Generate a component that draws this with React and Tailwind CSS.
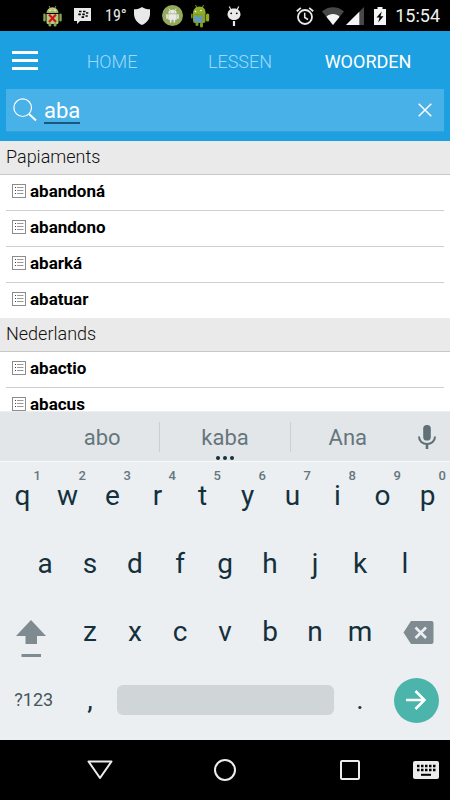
import { useState } from "react";

const results = [
  { language: "Papiaments", words: ["abandoná", "abandono", "abarká", "abatuar"] },
  { language: "Nederlands", words: ["abactio", "abacus"] },
];

const tabs = ["HOME", "LESSEN", "WOORDEN"];

const topRow = ["q", "w", "e", "r", "t", "y", "u", "i", "o", "p"];
const middleRow = ["a", "s", "d", "f", "g", "h", "j", "k", "l"];
const bottomRow = ["z", "x", "c", "v", "b", "n", "m"];

function StatusBar() {
  return (
    <div className="flex h-[31px] shrink-0 items-center justify-between bg-black pl-[43px] pr-[10px] text-white">
      <div className="flex items-center">
        {/* android with a red cross */}
        <svg className="h-[22px] w-[19px]" viewBox="0 0 19 22">
          <path d="M6 1l1.4 2.4M13 1l-1.4 2.4" stroke="#8a9a5a" strokeWidth="1" />
          <path d="M3.5 8a6 5.5 0 0 1 12 0z" fill="#9db45c" />
          <path d="M5 6a4.5 3.5 0 0 1 9 0z" fill="#b9cb86" />
          <path d="M3.5 9h12v8.5a1.5 1.5 0 0 1-1.500 1.500h-9a1.500 1.500 0 0 1-1.500-1.500z" fill="#b4c882" />
          <rect x="0.300" y="8.500" width="2.400" height="8" rx="1.200" fill="#8aa548" />
          <rect x="16.300" y="8.500" width="2.400" height="8" rx="1.200" fill="#8aa548" />
          <rect x="5.500" y="18" width="2.800" height="3.500" rx="1.200" fill="#8aa548" />
          <rect x="10.700" y="18" width="2.800" height="3.500" rx="1.200" fill="#8aa548" />
          <circle cx="7" cy="5.800" r="0.700" fill="#fff" />
          <circle cx="12" cy="5.800" r="0.700" fill="#fff" />
          <path d="M6 9.500l7 7.500M13 9.500l-7 7.500" stroke="#d0161b" strokeWidth="2.200" />
        </svg>
        {/* messenger bubble */}
        <svg className="ml-3 h-4 w-[17px]" viewBox="0 0 17 16">
          <path d="M0 0h17v13H6l-3 3v-3H0z" fill="#e9e9e9" />
          <path d="M5 3.500h2.500M9 3.500h2.500M4.300 6.300h2.500M8.300 6.300h2.500M12 5h2.300M11.500 8h2.300M7.600 9.200h2.500" stroke="#000" strokeWidth="1.700" />
        </svg>
        <span className="ml-[14px] w-[15px] font-['Roboto_Condensed','Liberation_Sans_Narrow',sans-serif] text-[16px] leading-5 text-[#e9e9e9]">19°</span>
        <svg className="ml-[14px] h-[18px] w-4" viewBox="0 0 16 18">
          <path d="M8 0C6 1.600 3 2.300 0 2.300V7c0 5 3.500 9 8 11 4.500-2 8-6 8-11V2.300C13 2.300 10 1.600 8 0z" fill="#e9e9e9" />
        </svg>
        <svg className="ml-3 h-[21px] w-[21px]" viewBox="0 0 21 21">
          <circle cx="10.500" cy="10.500" r="10.500" fill="#94a95c" />
          <path d="M7 3.600l1.400 2.200M14 3.600l-1.400 2.200" stroke="#e9e9e9" strokeWidth="0.800" />
          <path d="M6.300 8.500a4.200 3.700 0 0 1 8.400 0z" fill="#e9e9e9" />
          <path d="M6.300 9.200h8.400v5.600H6.300z" fill="#e9e9e9" />
          <path d="M5 9.800v3.500M16 9.800v3.500M8.700 14v3M12.300 14v3" stroke="#e9e9e9" strokeWidth="1.600" strokeLinecap="round" />
          <circle cx="8.700" cy="6.900" r="0.500" fill="#94a95c" />
          <circle cx="12.300" cy="6.900" r="0.500" fill="#94a95c" />
        </svg>
        {/* android with a blue cross */}
        <svg className="ml-2 h-6 w-[19px]" viewBox="0 0 19 24">
          <path d="M4.500 1l1.500 3M12.500 1l-1.500 3" stroke="#7f9a25" strokeWidth="1" />
          <path d="M2 11C1.500 6 4 2.500 8.500 2.500S15 6 14.500 10z" fill="#8fac2c" />
          <path d="M2 10.500l12.500-.8V17a2 2 0 0 1-2 2H4a2 2 0 0 1-2-2z" fill="#86a324" />
          <rect x="15" y="9.500" width="3.200" height="8" rx="1.600" fill="#8fac2c" />
          <rect x="0" y="9.500" width="1.700" height="5" rx="0.800" fill="#6f8a1c" />
          <rect x="4.500" y="18" width="3" height="4" rx="1.500" fill="#7f9a25" />
          <rect x="9" y="18" width="3" height="5.500" rx="1.500" fill="#7f9a25" />
          <circle cx="4.500" cy="7.500" r="0.800" fill="#fff" />
          <circle cx="10" cy="6.500" r="0.800" fill="#fff" />
          <path d="M3.500 12.500l7.500 5.500M11 12.500l-7.500 5" stroke="#5a97e4" strokeWidth="2.600" />
        </svg>
        {/* robot head on a pin */}
        <svg className="ml-[17px] h-5 w-[14px]" viewBox="0 0 14 20">
          <path d="M2.200 0.500l2 3.500M11.800 0.500l-2 3.500" stroke="#e9e9e9" strokeWidth="1.200" />
          <path d="M0.500 9a6.500 6.500 0 0 1 1-4C3 3 5 2.600 7 2.600s4 .4 5.500 2.400a6.500 6.500 0 0 1 1 4c-.5 3-3.300 5-6.500 5S1 12 .5 9z" fill="#e9e9e9" />
          <circle cx="4.200" cy="7.300" r="0.900" fill="#000" />
          <circle cx="9.800" cy="7.300" r="0.900" fill="#000" />
          <path d="M7 15v5" stroke="#e9e9e9" strokeWidth="2.200" />
        </svg>
      </div>

      <div className="flex items-center">
        <svg className="h-[18px] w-[18px]" viewBox="0 0 18 18" fill="none" stroke="#e9e9e9">
          <circle cx="9" cy="10" r="7" strokeWidth="1.800" />
          <path d="M0.800 4.200l4-3.300M17.200 4.200l-4-3.300" strokeWidth="1.800" />
          <path d="M8.700 5.800v4.700l3.300 2" strokeWidth="1.500" />
        </svg>
        <svg className="ml-2 h-[18px] w-[22px]" viewBox="0 0 22 18">
          <path d="M0 4.500C3 1.800 7 0.300 11 0.300s8 1.500 11 4.200L11 18z" fill="#484848" />
          <path d="M4.400 9.700C6 8 8.500 7 11 7s5 1 6.600 2.700L11 18z" fill="#f5f5f5" />
        </svg>
        <svg className="ml-[2px] h-[18px] w-[18px]" viewBox="0 0 18 18">
          <path d="M18 0v18H0z" fill="#484848" />
          <path d="M13.300 4.700V18H0z" fill="#f5f5f5" />
        </svg>
        <svg className="ml-[10px] h-[18px] w-3" viewBox="0 0 12 18">
          <path d="M3.500 0h5v2H12v16H0V2h3.500z" fill="#f5f5f5" />
          <path d="M7.800 4.500L2.500 10.500h3L4.200 15.500l5.300-6.300h-3z" fill="#000" />
        </svg>
        <span className="ml-[9px] text-[18px] leading-6 text-[#f0f0f0]">15:54</span>
      </div>
    </div>
  );
}

function Header({ query, setQuery, tab, setTab }) {
  return (
    <header className="shrink-0 bg-[#1ca0e2] pb-[9px]">
      <div className="flex h-[58px] items-center pl-3 pr-[18px]">
        <button aria-label="Menu" className="flex w-9 flex-col gap-[5px]">
          <span className="h-[3px] w-[26px] bg-white" />
          <span className="h-[3px] w-[26px] bg-white" />
          <span className="h-[3px] w-[26px] bg-white" />
        </button>
        <nav className="grid flex-1 grid-cols-3 pt-1">
          {tabs.map((name) => (
            <button
              key={name}
              onClick={() => setTab(name)}
              className={"text-[18px] leading-6 " + (tab === name ? "text-white" : "font-light text-[#a0d8f6]")}
            >
              {name}
            </button>
          ))}
        </nav>
      </div>

      <div className="mx-[6px] flex h-[43px] items-center border-b border-[#3a9fd4] bg-[#48b1e7] pl-[7px] pr-3">
        <svg className="h-6 w-6 shrink-0 text-white" viewBox="0 0 24 24" fill="none" stroke="currentColor">
          <circle cx="9.700" cy="9.700" r="8.800" strokeWidth="1.200" />
          <path d="M16 16l7 6.500" strokeWidth="2" />
        </svg>
        <input
          type="text"
          aria-label="Zoeken"
          value={query}
          onChange={(e) => setQuery(e.target.value)}
          className="mx-[7px] h-7 min-w-0 field-sizing-content border-b-2 border-[#17597d] bg-transparent pt-[2px] text-[22px] leading-6 text-white outline-none"
        />
        <button aria-label="Wissen" className="ml-auto" onClick={() => setQuery("")}>
          <svg className="h-[14px] w-[14px] text-white" viewBox="0 0 14 14" stroke="currentColor" strokeWidth="1.500">
            <path d="M0.700 0.700l12.600 12.600M13.300 0.700L0.700 13.300" />
          </svg>
        </button>
      </div>
    </header>
  );
}

function ListIcon() {
  return (
    <svg className="h-[14px] w-[14px] shrink-0" viewBox="0 0 14 14" fill="none">
      <rect x="0.500" y="0.500" width="13" height="13" stroke="#8c8c8c" />
      <path d="M3 3.500h1M3 6.500h1M3 9.500h1" stroke="#444" />
      <path d="M5 3.500h6.500M5 6.500h6.500M5 9.500h6.500" stroke="#999" />
    </svg>
  );
}

function WordList() {
  return (
    <main className="min-h-0 flex-1 overflow-hidden bg-white">
      {results.map((section) => (
        <section key={section.language}>
          <h2 className="flex h-[34px] items-center border-b border-[#c8c8c8] bg-[#eaeaea] px-[6px] pb-[2px] text-[18px] leading-6 font-light text-[#111]">
            {section.language}
          </h2>
          <ul className="px-[6px]">
            {section.words.map((word) => (
              <li key={word} className="border-b border-[#cfcfcf] last:border-b-0">
                <a href="#" className="flex h-[35px] items-center gap-1 px-[6px] pb-1 text-[17px] leading-6 font-bold text-black">
                  <ListIcon />
                  {word}
                </a>
              </li>
            ))}
          </ul>
        </section>
      ))}
    </main>
  );
}

function Suggestions() {
  return (
    <div className="flex h-[50px] shrink-0 items-center border-t border-[#eceeef] bg-[#e2e6e9] pl-[10%] text-[22px] text-[#65767c]">
      <button className="h-[30px] flex-[23] pt-[2px] leading-7">abo</button>
      <button className="relative h-[30px] flex-[26] border-x border-[#c9cfd2] pt-[2px] leading-7">
        kaba
        <span className="absolute inset-x-0 top-[34px] flex justify-center gap-[3px]">
          <i className="h-1 w-1 rounded-full bg-[#14303c]" />
          <i className="h-1 w-1 rounded-full bg-[#14303c]" />
          <i className="h-1 w-1 rounded-full bg-[#14303c]" />
        </span>
      </button>
      <button className="h-[30px] flex-[23] pt-[2px] leading-7">Ana</button>
      <button aria-label="Spraak" className="flex w-[45px] justify-center pr-[2px]">
        <svg className="h-6 w-[18px]" viewBox="0 0 18 24" fill="none">
          <rect x="5.200" y="0" width="7.600" height="15.500" rx="3.600" fill="#5f7077" />
          <path d="M1 11.500c0 4.500 3.600 7.500 8 7.500s8-3 8-7.500" stroke="#5f7077" strokeWidth="2" />
          <path d="M9 19v5" stroke="#5f7077" strokeWidth="2.600" />
        </svg>
      </button>
    </div>
  );
}

function Key({ letter, hint, onPress }) {
  return (
    <button onClick={() => onPress(letter)} className="relative col-span-2 h-[68px] text-[28px] leading-8 text-[#14303c]">
      {letter}
      {hint && <span className="absolute right-1 top-[6px] text-[13px] leading-4 font-medium text-[#65767c]">{hint}</span>}
    </button>
  );
}

function Keyboard({ onPress }) {
  return (
    <div className="grid shrink-0 grid-cols-20 border-t border-[#f8f9fa] bg-[#ebeff2] pb-[6px]">
      {topRow.map((letter, i) => (
        <Key key={letter} letter={letter} hint={String((i + 1) % 10)} onPress={onPress} />
      ))}

      <span />
      {middleRow.map((letter) => (
        <Key key={letter} letter={letter} onPress={onPress} />
      ))}
      <span />

      <button aria-label="Shift" className="col-span-3 flex items-center pl-4 pt-[14px]">
        <svg className="h-[38px] w-[30px]" viewBox="0 0 30 38" fill="#7f8b90">
          <path d="M15 0L30 16H21v8H9.500v-8H0z" />
          <rect x="5.500" y="34" width="19.500" height="3" />
        </svg>
      </button>
      {bottomRow.map((letter) => (
        <Key key={letter} letter={letter} onPress={onPress} />
      ))}
      <button aria-label="Backspace" className="col-span-3 flex items-center justify-end pr-4">
        <svg className="h-[23px] w-[31px]" viewBox="0 0 31 23">
          <path d="M8 0h20.500a2 2 0 0 1 2 2v19a2 2 0 0 1-2 2H8L0.500 11.500z" fill="#7f8b90" />
          <path d="M12.500 6.500l10.500 10.500M23 6.500L12.500 17" stroke="#ebeff2" strokeWidth="2.600" />
        </svg>
      </button>

      <button className="col-span-3 text-[18px] leading-6 text-[#45565d]">?123</button>
      <Key letter="," onPress={onPress} />
      <button aria-label="Spatie" onClick={() => onPress(" ")} className="col-span-10 mx-1 h-[30px] self-center rounded-md bg-[#d0d5d8]" />
      <Key letter="." onPress={onPress} />
      <button aria-label="Enter" className="col-span-3 flex h-[45px] w-[45px] items-center justify-center self-center justify-self-center rounded-full bg-[#4bb5ab]">
        <svg className="h-5 w-5" viewBox="0 0 20 20" fill="none" stroke="#fff" strokeWidth="2.600">
          <path d="M0 10h18M9.500 1l9 9-9 9" />
        </svg>
      </button>
    </div>
  );
}

function NavBar() {
  return (
    <div className="grid h-[60px] shrink-0 grid-cols-[3fr_10fr_10fr_10fr_3fr] items-center bg-black">
      <span />
      <button aria-label="Terug" className="flex justify-center">
        <svg className="h-5 w-[26px]" viewBox="0 0 26 20" fill="none" stroke="#ececec" strokeWidth="2" strokeLinejoin="round">
          <path d="M1.500 1.500h23L13 18z" />
        </svg>
      </button>
      <button aria-label="Start" className="flex justify-center">
        <span className="h-[22px] w-[22px] rounded-full border-2 border-[#ececec]" />
      </button>
      <button aria-label="Recent" className="flex justify-center">
        <span className="h-5 w-5 rounded-[2px] border-2 border-[#ececec]" />
      </button>
      <button aria-label="Toetsenbord" className="flex">
        <svg className="h-[18px] w-[26px]" viewBox="0 0 26 18">
          <rect width="26" height="18" rx="2" fill="#ececec" />
          <path d="M4 5h18.500M4 9h18.500" stroke="#000" strokeWidth="2.300" strokeDasharray="2.500 1.500" />
          <path d="M8 13.800h10" stroke="#000" strokeWidth="2" />
        </svg>
      </button>
    </div>
  );
}

export default function App() {
  const [query, setQuery] = useState("aba");
  const [tab, setTab] = useState("WOORDEN");

  const handlePress = (letter) => setQuery(query + letter);

  return (
    <div className="flex h-screen flex-col overflow-hidden bg-white font-[Roboto,sans-serif]">
      <StatusBar />
      <Header query={query} setQuery={setQuery} tab={tab} setTab={setTab} />
      <WordList />
      <Suggestions />
      <Keyboard onPress={handlePress} />
      <NavBar />
    </div>
  );
}
